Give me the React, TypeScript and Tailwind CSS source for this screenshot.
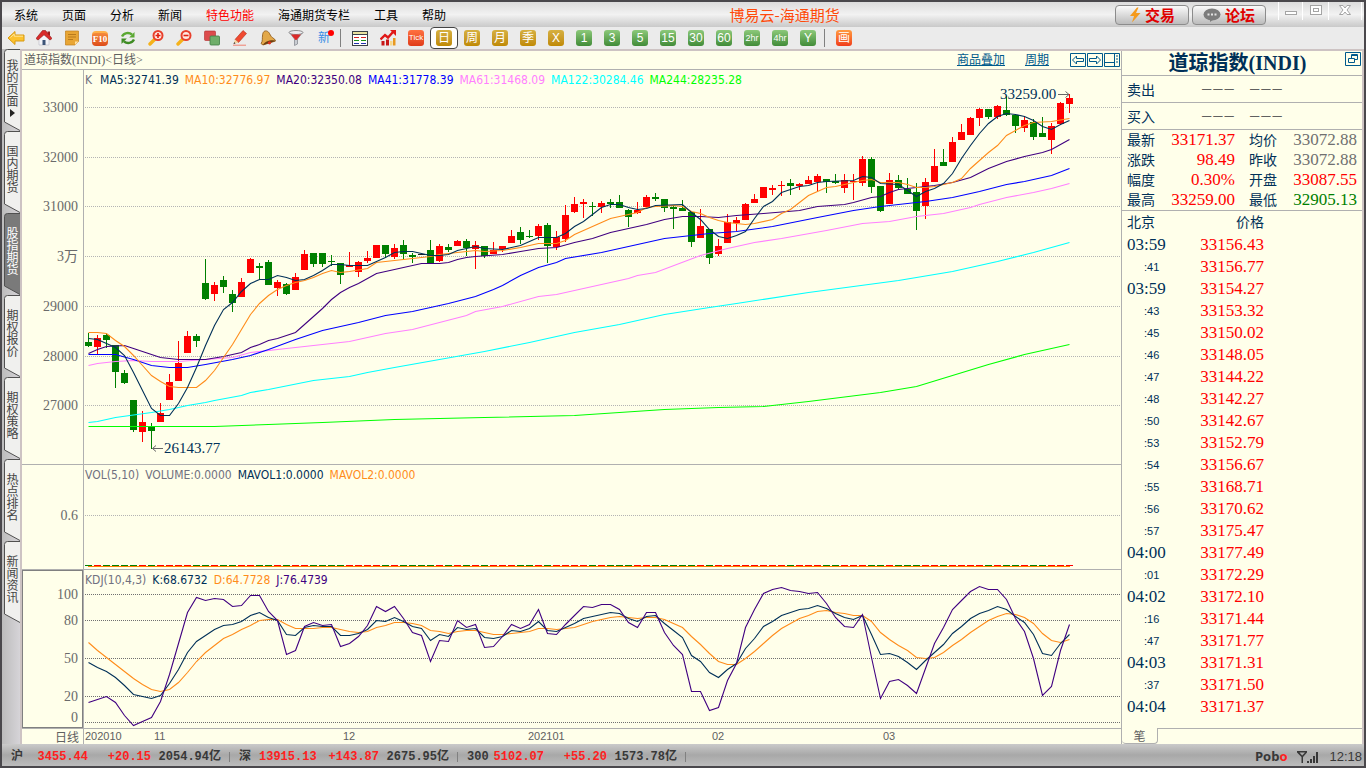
import React from "react";

type Point = [number, number];
// high, body top, body bottom, low, 1 = rising / 0 = falling
type Candle = [number, number, number, number, number];

const UP = "#ff0000";
const DOWN = "#008000";
const NAVY = "#003058";
const ORANGE = "#ff8c1a";
const PURPLE = "#400080";
const STEP = 9;

const candles: Candle[] = [
  [263, 272, 276, 277, 0], [265, 268, 277, 284, 1], [263, 265, 270, 278, 0], [275, 275, 302, 318, 0], [300, 303, 313, 314, 0],
  [330, 330, 360, 362, 0], [341, 352, 362, 372, 1], [353, 356, 361, 379, 0], [333, 343, 352, 352, 1], [304, 312, 330, 330, 1],
  [271, 293, 311, 311, 1], [261, 266, 283, 283, 1], [264, 266, 271, 277, 0], [189, 213, 229, 230, 0], [212, 215, 224, 231, 1],
  [206, 210, 217, 223, 0], [220, 224, 233, 242, 0], [208, 212, 227, 227, 1], [188, 189, 203, 203, 1], [193, 196, 198, 210, 0],
  [190, 192, 215, 215, 0], [210, 212, 218, 226, 1], [213, 214, 224, 225, 0], [203, 207, 220, 220, 1], [180, 184, 200, 200, 1],
  [183, 183, 194, 197, 0], [183, 183, 194, 197, 0], [185, 191, 192, 196, 0], [193, 193, 205, 214, 0], [182, 195, 197, 197, 1],
  [191, 192, 202, 207, 1], [181, 188, 191, 193, 1], [175, 175, 188, 188, 1], [175, 175, 184, 188, 0], [174, 178, 187, 189, 1],
  [170, 175, 184, 190, 0], [183, 185, 187, 193, 0], [184, 184, 185, 185, 0], [170, 180, 194, 194, 0], [174, 176, 191, 192, 1],
  [174, 177, 180, 182, 0], [170, 171, 176, 176, 1], [169, 171, 178, 186, 0], [171, 175, 179, 199, 1], [176, 176, 186, 188, 0],
  [172, 180, 184, 184, 1], [176, 176, 179, 182, 1], [160, 166, 173, 173, 1], [157, 162, 170, 174, 0], [160, 166, 167, 168, 0],
  [154, 156, 166, 170, 1], [153, 155, 176, 193, 0], [161, 167, 177, 180, 1], [135, 145, 169, 172, 1], [127, 134, 142, 143, 1],
  [129, 132, 134, 148, 1], [132, 136, 137, 146, 0], [131, 133, 137, 143, 1], [129, 132, 134, 138, 0], [125, 132, 138, 138, 0],
  [139, 140, 147, 157, 0], [132, 140, 143, 144, 1], [125, 127, 137, 137, 1], [123, 127, 129, 131, 0], [129, 129, 138, 142, 0],
  [136, 137, 139, 159, 0], [130, 138, 141, 141, 0], [142, 142, 172, 177, 0], [139, 156, 168, 168, 1], [159, 159, 188, 194, 0],
  [169, 176, 184, 186, 1], [144, 152, 173, 173, 1], [147, 150, 153, 161, 1], [133, 134, 150, 150, 1], [124, 129, 133, 133, 1],
  [117, 117, 128, 128, 1], [115, 118, 120, 125, 1], [111, 115, 116, 126, 1], [109, 113, 116, 125, 0], [113, 114, 116, 120, 1],
  [106, 110, 114, 114, 1], [104, 106, 112, 121, 1], [109, 109, 112, 123, 0], [104, 111, 113, 114, 0], [104, 110, 118, 123, 1],
  [104, 111, 112, 130, 1], [86, 89, 113, 116, 1], [87, 89, 117, 123, 0], [116, 116, 141, 142, 0], [103, 110, 134, 134, 1],
  [105, 110, 118, 120, 0], [108, 119, 124, 124, 0], [113, 122, 141, 160, 0], [108, 112, 136, 149, 1], [79, 96, 112, 112, 1],
  [79, 92, 96, 96, 0], [67, 72, 92, 92, 1], [54, 62, 70, 70, 1], [47, 48, 65, 65, 1], [38, 39, 48, 56, 1],
  [39, 39, 47, 49, 0], [35, 36, 47, 49, 1], [26, 40, 45, 46, 0], [45, 45, 56, 63, 0], [47, 50, 58, 62, 1],
  [49, 52, 67, 70, 0], [47, 63, 67, 67, 0], [53, 56, 70, 84, 1], [32, 33, 54, 54, 1], [24, 28, 34, 43, 1],
];

const ma5: Point[] = [
  [0, 268], [1, 269], [2, 273], [3, 277], [4, 285], [5, 302], [6, 320], [7, 338], [8, 345], [9, 345], [10, 333], [11, 317],
  [12, 297], [13, 275], [14, 255], [15, 239], [16, 232], [17, 221], [18, 213], [19, 209], [20, 209], [21, 205], [22, 207],
  [23, 210], [24, 209], [25, 205], [26, 200], [27, 194], [28, 194], [29, 195], [31, 195], [32, 191], [33, 187], [34, 182],
  [35, 181], [36, 181], [37, 183], [38, 185], [39, 185], [40, 184], [41, 180], [42, 178], [43, 176], [44, 178], [46, 179],
  [48, 175], [49, 171], [50, 167], [52, 167], [53, 163], [54, 156], [55, 151], [56, 144], [57, 137], [58, 134], [59, 134],
  [60, 137], [61, 139], [62, 138], [63, 135], [66, 134], [67, 142], [68, 149], [69, 159], [70, 166], [71, 168], [72, 165],
  [73, 161], [74, 148], [75, 136], [76, 131], [77, 122], [78, 119], [79, 116], [80, 115], [81, 112], [82, 111], [85, 110],
  [86, 106], [87, 107], [88, 113], [90, 114], [91, 120], [92, 126], [93, 121], [94, 118], [95, 113], [96, 103], [97, 88],
  [98, 75], [99, 63], [100, 53], [101, 46], [102, 43], [103, 44], [104, 46], [105, 50], [106, 56], [107, 59], [108, 54], [109, 50],
];

const ma10: Point[] = [
  [0, 262], [1, 262], [2, 263], [3, 270], [4, 276], [5, 285], [6, 295], [7, 305], [8, 311], [9, 316], [10, 317], [12, 317],
  [13, 310], [14, 300], [15, 287], [16, 274], [17, 259], [18, 244], [19, 233], [20, 225], [21, 219], [22, 215], [23, 212],
  [24, 210], [25, 207], [26, 203], [27, 200], [28, 202], [29, 201], [31, 198], [32, 192], [34, 190], [36, 188], [38, 186],
  [39, 184], [41, 182], [43, 180], [44, 181], [46, 180], [48, 177], [49, 175], [50, 173], [52, 173], [53, 170], [54, 164],
  [55, 160], [56, 156], [58, 148], [59, 146], [60, 144], [61, 142], [62, 137], [63, 136], [65, 135], [66, 136], [67, 141],
  [68, 143], [69, 147], [70, 150], [71, 152], [73, 154], [74, 153], [76, 149], [77, 143], [78, 139], [79, 132], [80, 125],
  [82, 117], [83, 116], [85, 112], [86, 110], [87, 109], [88, 112], [90, 112], [91, 114], [92, 117], [93, 117], [94, 116],
  [96, 112], [97, 108], [98, 98], [99, 90], [100, 82], [101, 75], [102, 65], [103, 60], [104, 55], [105, 52], [107, 51], [109, 48],
];

const ma20: Point[] = [
  [0, 283], [1, 279], [2, 276], [4, 275], [5, 278], [8, 287], [10, 289], [13, 289], [15, 286], [17, 282], [18, 277], [19, 274],
  [20, 270], [21, 268], [22, 265], [23, 262], [24, 254], [25, 246], [26, 238], [27, 229], [28, 222], [29, 217], [30, 213],
  [31, 208], [32, 203], [34, 199], [35, 197], [37, 193], [39, 193], [40, 192], [41, 189], [42, 187], [43, 186], [46, 184],
  [48, 181], [50, 178], [52, 177], [54, 172], [56, 168], [58, 162], [60, 158], [62, 154], [64, 149], [66, 146], [68, 146],
  [70, 147], [72, 145], [75, 143], [79, 140], [81, 136], [84, 134], [85, 132], [87, 127], [88, 126], [89, 122], [90, 119],
  [92, 117], [94, 115], [96, 112], [98, 107], [100, 98], [102, 91], [104, 86], [106, 82], [107, 79], [108, 74], [109, 69],
];

const ma41: Point[] = [
  [0, 284], [3, 284], [5, 289], [7, 295], [9, 297], [11, 297], [13, 294], [16, 289], [18, 285], [20, 279], [23, 269], [26, 260],
  [28, 256], [30, 252], [33, 245], [36, 241], [40, 233], [43, 226], [45, 219], [46, 215], [48, 205], [50, 197], [52, 192],
  [53, 188], [57, 182], [61, 174], [64, 168], [66, 166], [69, 163], [72, 161], [76, 156], [81, 147], [85, 140], [88, 136],
  [90, 134], [93, 131], [96, 127], [99, 121], [102, 114], [104, 111], [107, 105], [109, 98],
];

const ma61: Point[] = [
  [0, 295], [1, 293], [3, 291], [5, 290], [7, 291], [10, 291], [13, 289], [16, 287], [18, 282], [22, 278], [29, 271], [33, 263],
  [36, 259], [39, 252], [42, 245], [43, 241], [46, 236], [50, 226], [52, 224], [56, 216], [60, 208], [61, 205], [63, 202],
  [68, 185], [71, 178], [74, 172], [77, 168], [82, 160], [86, 153], [89, 151], [92, 146], [95, 143], [98, 137], [99, 134],
  [102, 127], [105, 122], [107, 118], [109, 113],
];

const ma122: Point[] = [
  [0, 352], [1, 351], [3, 347], [7, 342], [9, 339], [11, 335], [13, 332], [14, 330], [17, 325], [18, 322], [20, 319], [25, 310],
  [29, 306], [31, 302], [34, 297], [39, 289], [44, 281], [49, 272], [54, 262], [59, 254], [64, 244], [69, 237], [72, 233],
  [80, 222], [90, 210], [92, 207], [96, 201], [101, 191], [105, 182], [109, 172],
];

const ma244: Point[] = [
  [0, 356], [14, 356], [20, 354], [26, 352], [34, 349], [44, 347], [54, 345], [64, 339], [70, 337], [75, 336], [80, 331],
  [88, 322], [92, 316], [96, 305], [100, 294], [104, 284], [109, 274],
];

const kLine = [
  92, 97, 101, 107, 115, 124, 126, 128, 125, 113, 99, 82, 71, 65, 59, 55, 54, 51, 45, 42, 47, 50, 64, 65, 57, 55, 56, 56, 65,
  65, 63, 59, 50, 51, 47, 51, 56, 58, 70, 64, 66, 57, 59, 58, 67, 68, 66, 60, 61, 58, 51, 60, 61, 57, 53, 48, 46, 44, 42, 43,
  48, 51, 46, 45, 53, 60, 67, 85, 91, 102, 107, 99, 93, 78, 68, 56, 51, 45, 42, 39, 38, 35, 38, 43, 47, 49, 45, 64, 84, 83,
  86, 92, 99, 90, 82, 74, 63, 56, 48, 43, 40, 36, 39, 46, 52, 64, 83, 85, 73, 64,
];

const dLine = [
  72, 80, 87, 94, 101, 108, 114, 119, 121, 119, 112, 102, 91, 82, 75, 68, 64, 59, 55, 50, 49, 49, 54, 58, 58, 58, 57, 57, 59,
  61, 62, 61, 57, 55, 52, 52, 53, 55, 60, 61, 63, 61, 60, 60, 62, 64, 64, 63, 62, 61, 58, 58, 59, 58, 57, 54, 51, 49, 47, 46,
  47, 48, 47, 47, 49, 53, 57, 66, 74, 83, 91, 94, 94, 88, 81, 73, 65, 58, 53, 48, 45, 41, 40, 42, 43, 45, 45, 51, 62, 69, 75,
  80, 87, 88, 87, 82, 75, 69, 62, 56, 50, 46, 43, 44, 47, 53, 63, 70, 72, 69,
];

const jLine = [
  132, 129, 126, 132, 145, 155, 151, 147, 131, 104, 73, 42, 27, 30, 28, 29, 36, 35, 25, 25, 41, 50, 84, 80, 56, 52, 55, 54, 76,
  73, 66, 55, 36, 41, 36, 48, 62, 65, 91, 70, 71, 50, 57, 54, 77, 76, 66, 54, 58, 54, 39, 63, 64, 54, 45, 36, 37, 34, 34, 39,
  52, 57, 42, 42, 62, 75, 84, 121, 121, 140, 137, 110, 93, 57, 39, 23, 19, 17, 20, 21, 23, 22, 33, 47, 56, 57, 44, 87, 128,
  111, 109, 115, 123, 98, 73, 57, 39, 30, 21, 16, 19, 19, 29, 48, 61, 88, 125, 116, 80, 54,
];

const ticks: [string, string][] = [
  ["03:59", "33156.43"], [":41", "33156.77"], ["03:59", "33154.27"], [":43", "33153.32"], [":45", "33150.02"], [":46", "33148.05"],
  [":47", "33144.22"], [":48", "33142.27"], [":50", "33142.67"], [":53", "33152.79"], [":54", "33156.67"], [":55", "33168.71"],
  [":56", "33170.62"], [":57", "33175.47"], ["04:00", "33177.49"], [":01", "33172.29"], ["04:02", "33172.10"], [":16", "33171.44"],
  [":47", "33171.77"], ["04:03", "33171.31"], [":37", "33171.50"], ["04:04", "33171.37"],
];

const quotes = [
  ["最新", "33171.37", "text-[#ff0000]", "均价", "33072.88", "text-[#707070]"],
  ["涨跌", "98.49", "text-[#ff0000]", "昨收", "33072.88", "text-[#707070]"],
  ["幅度", "0.30%", "text-[#ff0000]", "开盘", "33087.55", "text-[#ff0000]"],
  ["最高", "33259.00", "text-[#ff0000]", "最低", "32905.13", "text-[#008000]"],
];

const menus = ["系统", "页面", "分析", "新闻", "特色功能", "海通期货专栏", "工具", "帮助"];
const sideTabs = ["我的页面", "国内期货", "股指期货", "期权报价", "期权策略", "热点排名", "新闻资讯"];

const indexes = [
  { name: "沪", price: "3455.44", change: "+20.15", volume: "2054.94亿" },
  { name: "深", price: "13915.13", change: "+143.87", volume: "2675.95亿" },
  { name: "300", price: "5102.07", change: "+55.20", volume: "1573.78亿" },
];

const toPath = (points: Point[]) => points.map(([i, y]) => `${4 + i * STEP},${y}`).join(" ");
const toSeries = (values: number[]) => toPath(values.map((y, i): Point => [i, y]));

function Grid({ rows, color }: { rows: number[]; color: string }) {
  return (
    <g stroke={color} strokeDasharray="1 1" shapeRendering="crispEdges">
      {rows.map((y) => (
        <line key={y} x1="1" x2="100%" y1={y + 0.5} y2={y + 0.5} />
      ))}
    </g>
  );
}

function Curve({ points, color }: { points: string; color: string }) {
  return <polyline points={points} transform="translate(.5 .5)" fill="none" stroke={color} strokeWidth="1.1" />;
}

function Axis({ height, labels }: { height: string; labels: [string, number][] }) {
  return (
    <svg className={`block w-full ${height}`}>
      {labels.map(([text, y]) => (
        <text key={text} x="56" y={y + 5} textAnchor="end" fill="#6a6a6a" className="font-['Liberation_Serif','Noto_Sans_CJK_SC',serif] text-sm">
          {text}
        </text>
      ))}
    </svg>
  );
}

function Legend({ items }: { items: [string, string][] }) {
  return (
    <div className="absolute left-px top-0 flex h-5 items-center gap-1.5 whitespace-nowrap font-['DejaVu_Sans_Condensed','Noto_Sans',sans-serif] text-xs">
      {items.map(([text, color]) => (
        <span key={text} className={color}>
          {text}
        </span>
      ))}
    </div>
  );
}

function Badge({ text, look }: { text: string; look: string }) {
  return (
    <span className={`flex size-4 items-center justify-center rounded-[3px] leading-none text-white ${look}`}>{text}</span>
  );
}

const GOLD = "bg-linear-to-b from-[#d6b040] to-[#c08a00] text-xs";
const GREEN = "bg-linear-to-b from-[#8cc97a] to-[#418c38] text-xs";
const GREEN_SMALL = "bg-linear-to-b from-[#8cc97a] to-[#418c38] text-[9px]";

const periods: [string, string][] = [
  ["日", GOLD], ["周", GOLD], ["月", GOLD], ["季", GOLD], ["X", GOLD],
  ["1", GREEN], ["3", GREEN], ["5", GREEN], ["15", GREEN], ["30", GREEN], ["60", GREEN],
  ["2hr", GREEN_SMALL], ["4hr", GREEN_SMALL], ["Y", GREEN],
];

function ToolButton({ label, active, children }: { label: string; active?: boolean; children: React.ReactNode }) {
  return (
    <button
      type="button"
      aria-label={label}
      className={`flex h-full w-7 shrink-0 items-center justify-center ${active ? "rounded border border-[#444] bg-white" : ""}`}
    >
      {children}
    </button>
  );
}

function Magnifier({ plus }: { plus?: boolean }) {
  return (
    <svg viewBox="0 0 16 16" className="size-4">
      <path d="M6.500 9.500 2 14" stroke="#f5b21a" strokeWidth="3.4" strokeLinecap="round" />
      <circle cx="10" cy="5.500" r="4.500" fill="#ffe9e2" stroke="#e8402c" strokeWidth="2" />
      <path d={plus ? "M7.500 5.500h5M10 3v5" : "M7.500 5.500h5"} stroke="#e02010" strokeWidth="1.600" />
    </svg>
  );
}

function Toolbar() {
  return (
    <div className="flex h-[22px] items-stretch bg-[#ebebeb] font-['Liberation_Sans','Noto_Sans_CJK_SC',sans-serif]">
      <ToolButton label="后退">
        <svg viewBox="0 0 18 16" className="h-4 w-[18px]">
          <path d="M1 8 8 1.500V5h9v6H8v3.500Z" fill="#fcc22e" stroke="#d89a10" strokeLinejoin="round" />
          <path d="M3.500 7.500 7.200 4v2.200H16" stroke="#ffe59a" fill="none" />
        </svg>
      </ToolButton>
      <ToolButton label="首页">
        <svg viewBox="0 0 16 16" className="size-4">
          <path d="M11.500 1.500h2.500v4h-2.500z" fill="#9b1f1f" />
          <path d="M3 8v7h10V8L8 3.500Z" fill="#f4f4f8" stroke="#b8b8c4" strokeWidth=".6" />
          <path d="M0 8.500 6.500 .5h3L16 8.500 14 10 8 4.800 2 10Z" fill="#d92b2b" stroke="#8e1414" strokeWidth=".6" />
          <path d="M6.500 10h3v5h-3z" fill="#3d5478" />
        </svg>
      </ToolButton>
      <ToolButton label="便笺">
        <svg viewBox="0 0 16 16" className="size-4">
          <path d="M2 1h12.500v10.500L11 15H1.500V1Z" fill="#e8a534" stroke="#c07f1c" strokeWidth=".7" />
          <path d="M4 4.500h8M4 7h8M4 9.500h5" stroke="#b97a1c" />
          <path d="M14.500 11.500 11 15v-3.500Z" fill="#ffe0a0" />
        </svg>
      </ToolButton>
      <ToolButton label="F10">
        <span className="flex h-[15px] w-4 items-center justify-center rounded-sm border-t-2 border-[#ffb04a] bg-linear-to-b from-[#f58a3c] to-[#dd4a18] font-['Liberation_Serif',serif] text-[9px] font-bold leading-none text-white">
          F10
        </span>
      </ToolButton>
      <ToolButton label="刷新">
        <svg viewBox="0 0 16 16" className="size-4" fill="none" strokeWidth="2.400">
          <path d="M2 6.500C4 2.500 9 2.200 12 4.500" stroke="#5aa832" />
          <path d="M14 9.500c-2 4-7 4.300-10 2" stroke="#3f8c24" />
          <path d="M14.500 2v5.500H9.200Z" fill="#5aa832" />
          <path d="M1.500 14V8.500h5.300Z" fill="#3f8c24" />
        </svg>
      </ToolButton>
      <ToolButton label="放大">
        <Magnifier plus />
      </ToolButton>
      <ToolButton label="缩小">
        <Magnifier />
      </ToolButton>
      <ToolButton label="叠加">
        <svg viewBox="0 0 16 16" className="size-4">
          <rect x="0.500" y="1" width="11" height="9.500" rx="1" fill="#dc4c4c" stroke="#b02e2e" strokeWidth=".6" />
          <rect x="6" y="6" width="9.500" height="9" rx="1" fill="#6fae6a" stroke="#3f7d44" strokeWidth=".8" />
        </svg>
      </ToolButton>
      <ToolButton label="画笔">
        <svg viewBox="0 0 16 16" className="size-4">
          <path d="M3 9.500 11 .5l3.500 3-8 9Z" fill="#f04a30" stroke="#b02a16" strokeWidth=".6" />
          <path d="M3 9.500 1.500 14l5-1.500Z" fill="#f3d3a0" />
          <path d="m1.500 14 2-.6-1.300-1.400Z" fill="#333" />
          <path d="M1 15.200h13" stroke="#f08070" />
        </svg>
      </ToolButton>
      <ToolButton label="预警">
        <svg viewBox="0 0 16 16" className="size-4">
          <path d="M4 1.500c2-1.500 4.500 0 5.500 2 1 2 2 4 5 5.500l1 2L3 15 1 13.500C3 11 2 8 2.500 6 2.500 4 3 2.500 4 1.500Z" fill="#e2a84a" stroke="#8a5414" strokeWidth=".8" />
          <path d="M3 15l12.500-4c-2-2-11-.5-12.500 4Z" fill="#6b3d10" />
          <circle cx="9.500" cy="12.800" r="1.600" fill="#e03020" />
        </svg>
      </ToolButton>
      <ToolButton label="筛选">
        <svg viewBox="0 0 16 16" className="size-4">
          <path d="M1.500 2.500 6.500 9v6.500l3-1.500V9l5-6.500Z" fill="#c9ccd2" stroke="#7e828a" strokeWidth=".7" />
          <ellipse cx="8" cy="2.500" rx="7" ry="2" fill="#ececf0" stroke="#777" strokeWidth=".8" />
          <path d="M3 4.500h10L8.500 10h-1Z" fill="#dc2a2a" />
        </svg>
      </ToolButton>
      <ToolButton label="新功能">
        <span className="relative text-xs text-[#3a8ee6]">
          新
          <i className="absolute -right-1 top-0 size-[6px] rounded-full bg-[#ff0000]" />
        </span>
      </ToolButton>
      <span className="my-0.5 ml-0.5 w-1.5 shrink-0 border-l border-[#808080]" />
      <ToolButton label="报价表">
        <svg viewBox="0 0 16 16" className="size-4" shapeRendering="crispEdges">
          <path d="M0 1h16v15H0z" fill="#3c4048" />
          <path d="M1 5h14v10H1z" fill="#fff" />
          <path d="M1 2h14v2H1z" fill="#e8e0a0" />
          <path d="M2 7h5v1H2zM9 7h5v1H9z" fill="#d82020" />
          <path d="M2 10h5v1H2zM9 10h5v1H9z" fill="#189018" />
          <path d="M2 13h5v1H2zM9 13h5v1H9z" fill="#2030b0" />
        </svg>
      </ToolButton>
      <ToolButton label="走势图">
        <svg viewBox="0 0 16 16" className="size-4">
          <path d="M1.500 11h3v4.500h-3zM6 9.500h3v6H6z" fill="#c81818" />
          <path d="M10 11h2.500v4.500H10z" fill="#f8d88a" />
          <path d="M13 8h2.500v7.500H13z" fill="#e89820" />
          <path d="M.5 9.500 5 5l3 2.500L13 2" fill="none" stroke="#e01818" strokeWidth="2.400" />
          <path d="M10 0h6v6Z" fill="#e01818" />
        </svg>
      </ToolButton>
      <ToolButton label="Tick">
        <Badge text="Tick" look="bg-linear-to-b from-[#ff7040] to-[#e03a18] text-[8px]" />
      </ToolButton>
      {periods.map(([text, look]) => (
        <ToolButton key={text} label={text} active={text === "日"}>
          <Badge text={text} look={look} />
        </ToolButton>
      ))}
      <span className="my-0.5 ml-0.5 w-1.5 shrink-0 border-l border-[#808080]" />
      <ToolButton label="画线">
        <Badge text="画" look="bg-linear-to-b from-[#ff9a40] to-[#f03a1a] text-xs" />
      </ToolButton>
    </div>
  );
}

function TitleBar() {
  const pill =
    "flex h-5 w-[74px] items-center justify-center gap-1 rounded border border-[#8c8c8c] bg-linear-to-b from-[#fafafa] to-[#bcbcbc] text-[15px] font-bold leading-none text-[#e00000]";
  return (
    <header className="flex h-[25px] items-center bg-linear-to-b from-[#dcdcdc] via-[#f2f2f2] to-[#c9c9c9] whitespace-nowrap">
      <nav className="flex">
        {menus.map((item) => (
          <button key={item} type="button" className={`px-3 text-xs leading-6 ${item === "特色功能" ? "text-[#ff0000]" : "text-black"}`}>
            {item}
          </button>
        ))}
      </nav>
      <h1 className="flex-1 pr-1 text-center text-[15px] leading-6 text-[#ff4a0a]">博易云-海通期货</h1>
      <div className="flex gap-[3px]">
        <button type="button" className={pill}>
          <svg viewBox="0 0 12 16" className="h-4 w-3">
            <path d="M8 .5 1 9h4l-2 6.500L11.500 6H7l2.500-5.500Z" fill="#f59a1c" />
          </svg>
          交易
        </button>
        <button type="button" className={pill}>
          <svg viewBox="0 0 18 14" className="h-3.5 w-[18px]">
            <ellipse cx="9" cy="6.500" rx="8.500" ry="6" fill="#7c7c7c" />
            <path d="M7 11v3l4-3Z" fill="#7c7c7c" />
            <path d="M4.500 5.500h2v2h-2zM8 5.500h2v2H8zM11.500 5.500h2v2h-2z" fill="#e4e4e4" />
          </svg>
          论坛
        </button>
      </div>
      <div className="flex h-full items-start pl-3 pr-0.5 text-[#a4a4a4]">
        <button type="button" aria-label="最小化" className="flex h-[18px] w-6 items-center justify-center border-l border-white">
          <svg className="h-4 w-3" viewBox="0 0 12 16" fill="#fff" stroke="currentColor">
            <rect x=".5" y="8.500" width="11" height="3" />
          </svg>
        </button>
        <button type="button" aria-label="最大化" className="flex h-[18px] w-[26px] items-center justify-center border-l border-white">
          <svg className="h-4 w-3" viewBox="0 0 12 16" fill="#fff" stroke="currentColor">
            <rect x=".5" y="2.500" width="11" height="9" />
            <rect x="3.500" y="5.500" width="5" height="3" />
          </svg>
        </button>
        <button type="button" aria-label="关闭" className="flex h-[18px] w-[34px] items-center justify-center border-x border-white">
          <svg className="h-4 w-3" viewBox="0 0 12 16" fill="#fff" stroke="currentColor">
            <path d="M.5 2.500h3.500L6 5l2-2.500h3.500L8 7l3.500 4.500H8L6 9l-2 2.500H.5L4 7Z" />
          </svg>
        </button>
      </div>
    </header>
  );
}

function SideTabs() {
  return (
    <aside className="flex w-[18px] shrink-0 flex-col bg-linear-to-r from-[#bcbcbc] to-[#d6d4d8] pl-0.5">
      {sideTabs.map((tab, i) => {
        const active = tab === "股指期货";
        return (
          <button
            key={tab}
            type="button"
            className={`relative flex h-[82px] w-4 items-start justify-center ${i === 0 ? "pt-2.5" : "pt-3.5"} ${active ? "text-white" : "text-[#444]"}`}
          >
            <svg viewBox="0 0 16 82" className="absolute inset-0 h-full w-full" aria-hidden="true">
              <path
                d="M16 .5H3.500Q.5.500.5 3.500V73L16 81.500"
                fill={active ? "#7a7a7a" : "#f0f0ee"}
                stroke="#505050"
              />
            </svg>
            <span className="relative text-xs leading-3 [writing-mode:vertical-rl]">{tab}</span>
            {i === 0 && (
              <svg viewBox="0 0 5 8" className="absolute bottom-3.5 left-1.5 h-2 w-[5px]">
                <path d="M0 0 5 4 0 8Z" fill="#222" />
              </svg>
            )}
          </button>
        );
      })}
    </aside>
  );
}

function ChartHeader() {
  return (
    <div className="flex h-[19px] items-center border-b border-[#b0b0b0] font-['Liberation_Serif','Noto_Sans_CJK_SC',serif] text-xs leading-4 whitespace-nowrap">
      <span className="flex-1 pl-0.5 text-[#606060]">道琼指数(INDI)&lt;日线&gt;</span>
      <a href="#overlay" className="mr-5 text-[#005a8c] underline">
        商品叠加
      </a>
      <a href="#period" className="mr-[21px] text-[#005a8c] underline">
        周期
      </a>
      <div className="flex items-center gap-px pr-px">
        <button type="button" aria-label="向左">
          <svg viewBox="0 0 16 14" className="block h-3.5 w-4" fill="none" stroke="#005a8c">
            <path d="M.5.500h15v13H.5zM2.500 7l4-4v2.500h7v3h-7V11Z" />
          </svg>
        </button>
        <button type="button" aria-label="向右">
          <svg viewBox="0 0 16 14" className="block h-3.5 w-4" fill="none" stroke="#005a8c">
            <path d="M.5.500h15v13H.5zM13.500 7l-4-4v2.500h-7v3h7V11Z" />
          </svg>
        </button>
        <button type="button" aria-label="布局">
          <svg viewBox="0 0 16 14" className="block h-3.5 w-4" fill="none" stroke="#005a8c">
            <path d="M.5.500h15v13H.5zM10.500 1v12M1 9.500h9" />
            <path d="M13 2.500v9" strokeWidth="2" strokeDasharray="1 2" />
          </svg>
        </button>
      </div>
    </div>
  );
}

function Charts() {
  const row = "grid grid-cols-[62px_1fr] border-b border-[#b0b0b0]";
  const note = "font-['Liberation_Serif',serif] text-[15px]";
  return (
    <section className="flex min-w-0 flex-1 flex-col border-r border-[#b0b0b0]">
      <ChartHeader />

      {/* candles */}
      <div className={row}>
        <div className="border-r border-[#b0b0b0]">
          <Axis
            height="h-[394px]"
            labels={[["33000", 37], ["32000", 87], ["31000", 136], ["3万", 186], ["29000", 236], ["28000", 286], ["27000", 335]]}
          />
        </div>
        <div className="relative min-w-0">
          <svg className="block h-[394px] w-full">
            <Grid rows={[37, 87, 136, 186, 236, 286, 335]} color="#b4b4b4" />
            <g shapeRendering="crispEdges">
              {candles.map(([high, top, bottom, low, up], i) => (
                <g key={i} fill={i === 37 ? "#202020" : up ? UP : DOWN}>
                  <rect x={4 + i * STEP} y={high} width="1" height={low - high} />
                  <rect x={1 + i * STEP} y={top} width="7" height={bottom - top} />
                </g>
              ))}
            </g>
            <Curve points={toPath(ma244)} color="#00ff00" />
            <Curve points={toPath(ma122)} color="#00ffff" />
            <Curve points={toPath(ma61)} color="#ff80ff" />
            <Curve points={toPath(ma41)} color="#0000ff" />
            <Curve points={toPath(ma20)} color={PURPLE} />
            <Curve points={toPath(ma10)} color={ORANGE} />
            <Curve points={toPath(ma5)} color={NAVY} />
            <text x="80" y="383" fill={NAVY} className={note}>
              26143.77
            </text>
            <path d="M68.500 378.500H79M72 375.500l-3.500 3 3.500 3" fill="none" stroke="#666" />
            <text x="916" y="29" fill={NAVY} className={note}>
              33259.00
            </text>
            <path d="M974 24.500h11M981.500 21.500l3.500 3-3.500 3" fill="none" stroke="#666" />
          </svg>
          <Legend
            items={[
              ["K", "mr-0.5 text-[#707080]"],
              ["MA5:32741.39", "text-[#003058]"],
              ["MA10:32776.97", "text-[#ff8c1a]"],
              ["MA20:32350.08", "text-[#400080]"],
              ["MA41:31778.39", "text-[#0000ff]"],
              ["MA61:31468.09", "text-[#ff80ff]"],
              ["MA122:30284.46", "text-[#00ffff]"],
              ["MA244:28235.28", "text-[#00ff00]"],
            ]}
          />
        </div>
      </div>

      {/* volume */}
      <div className={row}>
        <div className="border-r border-[#b0b0b0]">
          <Axis height="h-[104px]" labels={[["0.6", 50]]} />
        </div>
        <div className="relative min-w-0">
          <svg className="block h-[104px] w-full">
            <Grid rows={[50]} color="#b4b4b4" />
            <g shapeRendering="crispEdges">
              {candles.map(([, , , , up], i) => (
                <rect key={i} x={1 + i * STEP} y="100" width="7" height="1" fill={up ? UP : DOWN} />
              ))}
              <rect x="4" y="101" width="982" height="1" fill="#ff8000" />
            </g>
          </svg>
          <Legend
            items={[
              ["VOL(5,10)", "text-[#707080]"],
              ["VOLUME:0.0000", "text-[#707080]"],
              ["MAVOL1:0.0000", "text-[#003058]"],
              ["MAVOL2:0.0000", "text-[#ff8c1a]"],
            ]}
          />
        </div>
      </div>

      {/* KDJ */}
      <div className={row}>
        <div className="border-r border-[#b0b0b0]">
          <div className="outline-1 -outline-offset-1 outline-[#808080]">
            <Axis height="h-[158px]" labels={[["100", 24], ["80", 50], ["50", 88], ["20", 126], ["0", 147]]} />
          </div>
        </div>
        <div className="relative min-w-0">
          <svg className="block h-[158px] w-full">
            <Grid rows={[24, 50, 88, 126, 152]} color="#707070" />
            <Curve points={toSeries(dLine)} color={ORANGE} />
            <Curve points={toSeries(kLine)} color={NAVY} />
            <Curve points={toSeries(jLine)} color={PURPLE} />
          </svg>
          <Legend
            items={[
              ["KDJ(10,4,3)", "text-[#707080]"],
              ["K:68.6732", "text-[#003058]"],
              ["D:64.7728", "text-[#ff8c1a]"],
              ["J:76.4739", "text-[#400080]"],
            ]}
          />
        </div>
      </div>

      {/* dates */}
      <div className="grid grid-cols-[62px_1fr]">
        <div className="border-r border-[#b0b0b0] pr-1 text-right text-xs leading-[15px] text-[#606060]">日线</div>
        <svg className="block h-[15px] w-full font-['Liberation_Sans',sans-serif] text-[11px]" fill="#606060">
          <text x="1" y="11">202010</text>
          <text x="70" y="11">11</text>
          <text x="259" y="11">12</text>
          <text x="444" y="11">202101</text>
          <text x="628" y="11">02</text>
          <text x="799" y="11">03</text>
        </svg>
      </div>
    </section>
  );
}

function QuotePanel() {
  const num = "font-['Liberation_Serif',serif] text-[17px]";
  return (
    <section className="flex w-[240px] shrink-0 flex-col text-sm text-[#003058]">
      <div className="flex h-[25px] items-start border-b border-[#b0b0b0]">
        <h2 className="flex-1 pl-2 text-center font-['Liberation_Serif','Noto_Sans_CJK_SC',serif] text-xl font-bold leading-6">
          道琼指数(INDI)
        </h2>
        <button type="button" aria-label="还原" className="mr-px mt-px">
          <svg viewBox="0 0 16 14" className="block h-3.5 w-4" fill="none" stroke="#005a8c">
            <path d="M.5.500h15v13H.5zM3.500 6.500h6v4h-6zM6.500 6V2.500h6v5H10M6.500 3.500h6" />
          </svg>
        </button>
      </div>
      {["卖出", "买入"].map((side) => (
        <div key={side} className="flex h-[27px] items-center border-b border-[#b0b0b0] pb-px pl-[5px]">
          <span className="w-[74px]">{side}</span>
          <span className="w-12 font-['Liberation_Serif',serif] text-xl leading-5 text-[#606060]">−−−</span>
          <span className="font-['Liberation_Serif',serif] text-xl leading-5 text-[#606060]">−−−</span>
        </div>
      ))}
      <table className="w-full border-b border-[#b0b0b0]">
        <tbody>
          {quotes.map(([a, av, ac, b, bv, bc]) => (
            <tr key={a} className="h-5 leading-5">
              <th scope="row" className="w-[42px] p-0 pl-[5px] text-left align-top font-normal leading-[18px]">{a}</th>
              <td className={`w-[71px] p-0 text-right ${num} leading-5 ${ac}`}>{av}</td>
              <th scope="row" className="w-[56px] p-0 pl-3.5 text-left align-top font-normal leading-[18px]">{b}</th>
              <td className={`p-0 pr-[5px] text-right ${num} leading-5 ${bc}`}>{bv}</td>
            </tr>
          ))}
        </tbody>
      </table>
      <table className="w-full">
        <thead>
          <tr className="h-[23px] align-top leading-5">
            <th className="w-[60px] p-0 pl-[5px] text-left font-normal">北京</th>
            <th className="w-[82px] p-0 text-right font-normal">价格</th>
            <th className="p-0" />
          </tr>
        </thead>
        <tbody>
          {ticks.map(([time, price], i) => (
            <tr key={i} className="h-[22px] leading-[22px]">
              <td className={time.length > 3 ? `p-0 pl-[5px] ${num}` : "p-0 pl-[22px] font-['Liberation_Sans',sans-serif] text-[11px]"}>{time}</td>
              <td className={`p-0 text-right text-[#ff0000] ${num}`}>{price}</td>
              <td className="p-0" />
            </tr>
          ))}
        </tbody>
      </table>
      <div className="mt-auto flex h-4">
        <button type="button" className="w-9 rounded-b border-b border-r border-[#b0b0b0] text-xs leading-[15px] text-[#606060]">
          笔
        </button>
        <span className="flex-1 border-t border-[#b0b0b0]" />
      </div>
    </section>
  );
}

function StatusBar() {
  return (
    <footer className="flex h-[22px] items-center bg-linear-to-b from-[#cacaca] via-[#a8a8a8] to-[#bcbcbc] pl-[9px] pt-1 font-['Liberation_Mono','Noto_Sans_CJK_SC',monospace] text-xs font-bold text-[#383838] whitespace-nowrap">
      {indexes.map((item) => (
        <div key={item.name} className="flex w-[228px] shrink-0 items-center">
          <span className="w-5">{item.name}</span>
          <span className="w-[57px] text-right text-[#ff2020]">{item.price}</span>
          <span className="w-[63px] text-right text-[#ff2020]">{item.change}</span>
          <span className="w-[70px] text-right">{item.volume}</span>
          <span className="ml-2 h-2.5 border-l border-[#808080]" />
        </div>
      ))}
      <span className="ml-auto font-['Open_Sans',sans-serif] text-[13px]">
        Pob<span className="text-[#ff2020]">o</span>
      </span>
      <svg viewBox="0 0 22 12" className="ml-2.5 h-3 w-[22px]" fill="#383838">
        <path d="M0 0h10v1.500L6 6v6H4.500V6L0 1.500Zm2.500 1.500L5.200 4.500 8 1.500Z" fillRule="evenodd" />
        <path d="M10 10h2v2h-2zM13 8h2v4h-2zM16 5h2v7h-2zM19 1h2v11h-2z" />
      </svg>
      <time className="ml-2.5 mr-0.5 font-['Liberation_Sans',sans-serif] text-[13px] font-normal">12:18</time>
    </footer>
  );
}

export default function App() {
  return (
    <div className="flex min-h-screen flex-col overflow-hidden border-2 border-[#4a484c] bg-[#ebebeb] font-['Noto_Sans_CJK_SC',sans-serif]">
      <TitleBar />
      <Toolbar />
      <div className="flex flex-1">
        <SideTabs />
        <main className="flex min-w-0 flex-1 border-x-2 border-t-2 border-[#cdc3c3] bg-[#ffffea]">
          <Charts />
          <QuotePanel />
        </main>
      </div>
      <StatusBar />
    </div>
  );
}
